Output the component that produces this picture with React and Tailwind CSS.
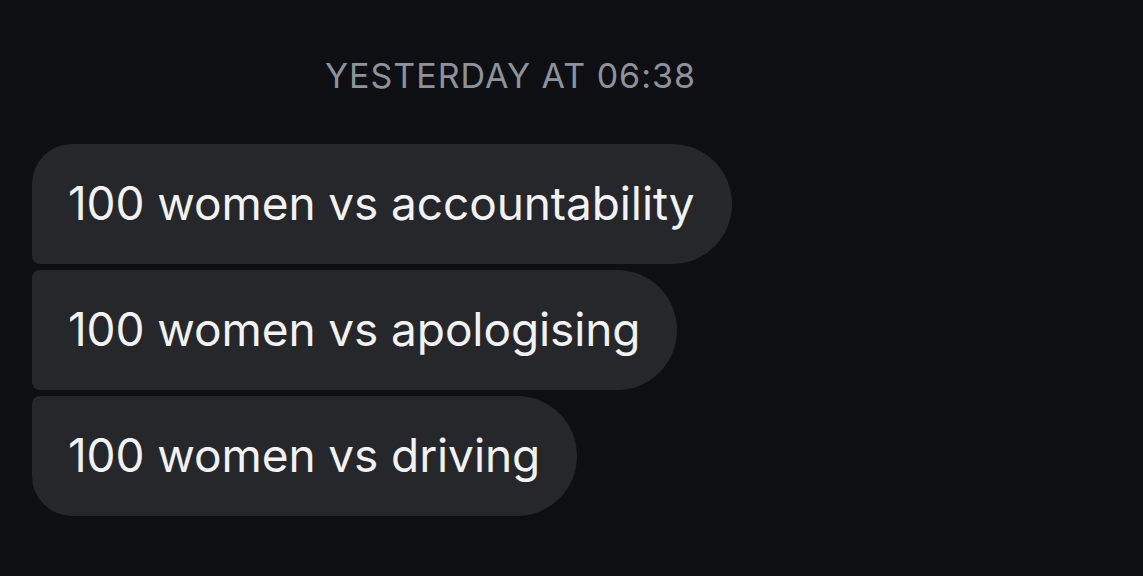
export default function App() {
  const font = { fontFamily: 'Inter, "Noto Sans", sans-serif' };
  return (
    <div className="w-[1143px] h-[576px] bg-[#0d0f13] overflow-hidden" style={font}>
      <div className="pt-[56px] pl-[325px] text-[34px] leading-[40px] text-[#8e929b] tracking-[1px]">
        YESTERDAY AT 06:38
      </div>
      <div className="mt-[48px] pl-[32px] flex flex-col items-start gap-[6px]">
        <div className="h-[120px] flex items-center pl-[36px] pr-[37px] pb-[2px] bg-[#25272b] text-[#f2f2f4] text-[46px] tracking-[-0.1px] rounded-tl-[40px] rounded-bl-[8px] rounded-r-[60px]">
          100 women vs accountability
        </div>
        <div className="h-[120px] flex items-center pl-[36px] pr-[37px] pb-[2px] bg-[#25272b] text-[#f2f2f4] text-[46px] tracking-[-0.1px] rounded-l-[8px] rounded-r-[60px]">
          100 women vs apologising
        </div>
        <div className="h-[120px] flex items-center pl-[36px] pr-[37px] pb-[2px] bg-[#25272b] text-[#f2f2f4] text-[46px] tracking-[-0.1px] rounded-tl-[8px] rounded-bl-[40px] rounded-r-[60px]">
          100 women vs driving
        </div>
      </div>
    </div>
  );
}
